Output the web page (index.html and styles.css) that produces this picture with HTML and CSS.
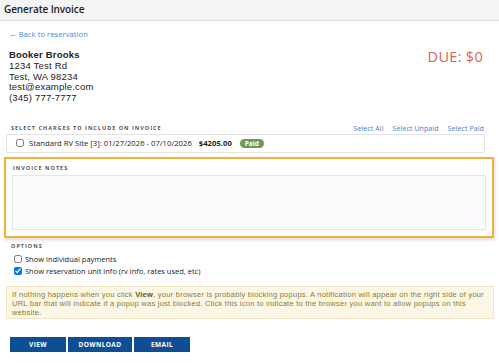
FILE: index.html
```html
<!DOCTYPE html>
<html lang="en">
<head>
    <meta charset="UTF-8">
    <title>Generate Invoice</title>
    <link rel="stylesheet" href="styles.css">
</head>
<body>
    <div class="header">
        <h1>Generate Invoice</h1>
    </div>

    <div class="content">
        <a class="back-link" href="#">&larr; Back to reservation</a>

        <div class="customer-row">
            <div class="customer">
                <div class="name">Booker Brooks</div>
                <div>1234 Test Rd</div>
                <div>Test, WA 98234</div>
                <div>test@example.com</div>
                <div>(345) 777-7777</div>
            </div>
            <div class="due">DUE: $0</div>
        </div>

        <div class="section-head">
            <span class="label">Select charges to include on invoice</span>
            <div class="select-links">
                <a href="#">Select All</a>
                <a href="#">Select Unpaid</a>
                <a href="#">Select Paid</a>
            </div>
        </div>
        <div class="charges">
            <label class="charge">
                <input type="checkbox">
                <span>Standard RV Site [3]: 01/27/2026 - 07/10/2026</span>
                <span class="amount">$4205.00</span>
                <span class="badge">Paid</span>
            </label>
        </div>

        <div class="notes-box">
            <div class="label">Invoice notes</div>
            <textarea class="notes"></textarea>
        </div>

        <div class="label options-label">Options</div>
        <label class="option"><input type="checkbox"> Show individual payments</label>
        <label class="option"><input type="checkbox" checked> Show reservation unit info (rv info, rates used, etc)</label>

        <div class="warning">
            If nothing happens when you click <b>View</b>, your browser is probably blocking popups. A notification will appear on the right side of your URL bar that will indicate if a popup was just blocked. Click this icon to indicate to the browser you want to allow popups on this website.
        </div>

        <div class="buttons">
            <button class="btn btn-view">View</button>
            <button class="btn btn-download">Download</button>
            <button class="btn btn-email">Email</button>
        </div>
    </div>
</body>
</html>
```

FILE: styles.css
```css
* {
    margin: 0;
    padding: 0;
    box-sizing: border-box;
}

body {
    background: white;
    font-family: "Open Sans", "Liberation Sans", sans-serif;
    color: #222;
    width: 499px;
    height: 364px;
    overflow: hidden;
}

.header {
    height: 21px;
    background: #f4f4f4;
    border-bottom: 1px solid #e2e2e2;
    padding: 2px 4px;
}

.header h1 {
    font-size: 10px;
    font-weight: 600;
    line-height: 15px;
    letter-spacing: -0.1px;
    color: #222;
}

.content {
    padding: 8px 9px 0 9px;
}

.back-link {
    display: block;
    font-size: 7.5px;
    color: #3d8bd8;
    text-decoration: none;
    letter-spacing: 0.1px;
    line-height: 10px;
}

.customer-row {
    display: flex;
    justify-content: space-between;
    margin-top: 11px;
}

.customer {
    font-family: "Liberation Sans", Arial, sans-serif;
    font-size: 9.5px;
    line-height: 10.8px;
    letter-spacing: 0.2px;
    color: #222;
}

.customer .name {
    font-weight: 700;
}

.due {
    font-size: 14.5px;
    color: #d3665c;
    margin-top: -3px;
    margin-right: 7px;
    letter-spacing: 0.3px;
}

.section-head {
    display: flex;
    justify-content: space-between;
    align-items: center;
    margin-top: 20px;
    padding: 0 6px 0 2px;
}

.label {
    font-size: 5.5px;
    font-weight: 700;
    letter-spacing: 1px;
    text-transform: uppercase;
    color: #555;
}

.select-links {
    display: flex;
    gap: 9px;
}

.select-links a {
    font-size: 7px;
    color: #3d7fc6;
    text-decoration: none;
    letter-spacing: 0.1px;
}

.charges {
    margin: 1px 5px 0 -3px;
    border: 1px solid #e3e3e3;
    border-radius: 2px;
    padding: 3px 9px;
    height: 19px;
}

.charge {
    display: flex;
    align-items: center;
    gap: 3px;
    font-size: 7.7px;
    color: #222;
    line-height: 11px;
}

.charge input,
.option input {
    width: 8px;
    height: 8px;
    margin: 0 2px 0 0;
}

.charge .amount {
    font-weight: 700;
    margin-left: 4px;
}

.charge .badge {
    margin-left: 5px;
    background: #6a9b5e;
    color: white;
    font-size: 6.5px;
    font-weight: 700;
    padding: 1px 5px;
    border-radius: 5px;
    line-height: 7px;
}

.notes-box {
    margin: 4px -4px 0 -5px;
    border: 2px solid #f0b23a;
    box-shadow: 1px 2px 3px rgba(0, 0, 0, 0.15);
    padding: 5px 6px 6px 6px;
    height: 81px;
}

.notes-box .label {
    padding-left: 1px;
}

.notes {
    display: block;
    width: 100%;
    height: 55px;
    margin-top: 3px;
    border: 1px solid #e6e6e6;
    background: #fcfcfd;
    resize: none;
}

.options-label {
    margin-top: 4px;
    padding-left: 2px;
}

.option {
    display: flex;
    align-items: center;
    gap: 1px;
    font-size: 7.5px;
    color: #222;
    padding-left: 5px;
    line-height: 12px;
}

.option:first-of-type {
    margin-top: 3px;
}

.warning {
    margin: 9px -4px 0 -3px;
    background: #fcf6e4;
    border: 1px solid #f0e5c5;
    color: #8b7a3c;
    font-family: "Liberation Sans", Arial, sans-serif;
    font-size: 7.5px;
    line-height: 9px;
    letter-spacing: 0.25px;
    padding: 3px 5px;
    height: 33px;
}

.warning b {
    color: #5f5020;
}

.buttons {
    display: flex;
    gap: 2px;
    margin-top: 18px;
    padding-left: 1px;
}

.btn {
    height: 15px;
    background: #0d4f95;
    color: white;
    border: none;
    font-family: "Open Sans", "Liberation Sans", sans-serif;
    font-size: 6.5px;
    font-weight: 700;
    text-transform: uppercase;
    letter-spacing: 0.4px;
}

.btn-view {
    width: 56px;
}

.btn-download {
    width: 64px;
}

.btn-email {
    width: 56px;
}
```
